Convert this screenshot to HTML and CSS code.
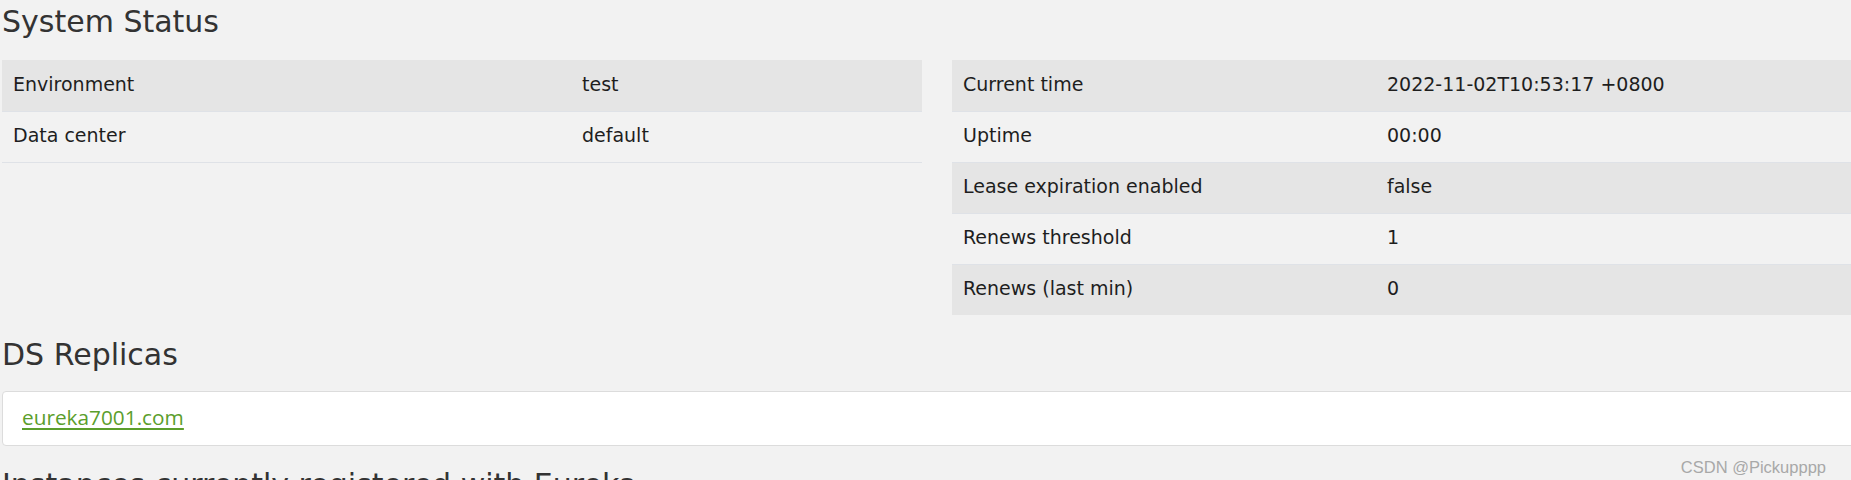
FILE: index.html
```html
<!DOCTYPE html>
<html>
<head>
<meta charset="utf-8">
<title>Eureka</title>
<link rel="stylesheet" href="styles.css">
</head>
<body>
<div class="page">
  <h2 class="title">System Status</h2>
  <div class="status-grid">
    <table class="kv kv-left">
      <tbody>
        <tr class="stripe"><td class="label">Environment</td><td>test</td></tr>
        <tr><td class="label">Data center</td><td>default</td></tr>
      </tbody>
    </table>
    <table class="kv kv-right">
      <tbody>
        <tr class="stripe"><td class="label">Current time</td><td>2022-11-02T10:53:17 +0800</td></tr>
        <tr><td class="label">Uptime</td><td>00:00</td></tr>
        <tr class="stripe"><td class="label">Lease expiration enabled</td><td>false</td></tr>
        <tr><td class="label">Renews threshold</td><td>1</td></tr>
        <tr class="stripe"><td class="label">Renews (last min)</td><td>0</td></tr>
      </tbody>
    </table>
  </div>
  <h2 class="title title-ds">DS Replicas</h2>
  <div class="replicas">
    <a class="replica-link" href="#">eureka7001.com</a>
  </div>
  <h2 class="title title-inst">Instances currently registered with Eureka</h2>
</div>
<div class="watermark">CSDN @Pickupppp</div>
</body>
</html>
```

FILE: styles.css
```css
html, body {
  margin: 0;
  padding: 0;
  overflow: hidden;
  background: #f2f2f2;
}
body {
  width: 1851px;
  height: 480px;
  position: relative;
  font-family: "DejaVu Sans", sans-serif;
  color: #1e1e1e;
}
.page {
  width: 1880px;
  padding: 5px 0 0 2px;
}
.title {
  margin: 0;
  font-family: "DejaVu Sans", sans-serif;
  font-weight: normal;
  font-size: 30px;
  line-height: 33px;
  color: #333;
}
.status-grid {
  display: flex;
  gap: 30px;
  margin-top: 22px;
  align-items: flex-start;
}
.kv {
  width: 920px;
  border-collapse: collapse;
  font-size: 19px;
  flex: none;
}
.kv td {
  padding: 13px 11px 17px 11px;
  line-height: 20px;
  border-top: 1px solid #dfe2e7;
  white-space: nowrap;
}
.kv tr:first-child td {
  border-top-color: #e5e5e5;
}
.kv tr.stripe td {
  background: #e5e5e5;
}
.kv-left .label { width: 547px; }
.kv-right .label { width: 402px; }
.kv-left tr:last-child td {
  border-bottom: 1px solid #dfe2e7;
}
.title-ds {
  margin-top: 23px;
}
.replicas {
  margin-top: 20px;
  background: #fff;
  border: 1px solid #dcdcdc;
  border-radius: 4px;
  padding: 15px 19px;
  line-height: 20px;
}
.replica-link {
  font-family: "Open Sans", sans-serif;
  font-size: 20.8px;
  color: #5b9e2c;
  text-decoration: underline;
  text-underline-offset: 3px;
}
.title-inst {
  margin-top: 22px;
}
.watermark {
  position: absolute;
  right: 25px;
  top: 458px;
  font-family: "Liberation Sans", Arial, sans-serif;
  font-size: 16.5px;
  color: #a8a8a8;
}
```
